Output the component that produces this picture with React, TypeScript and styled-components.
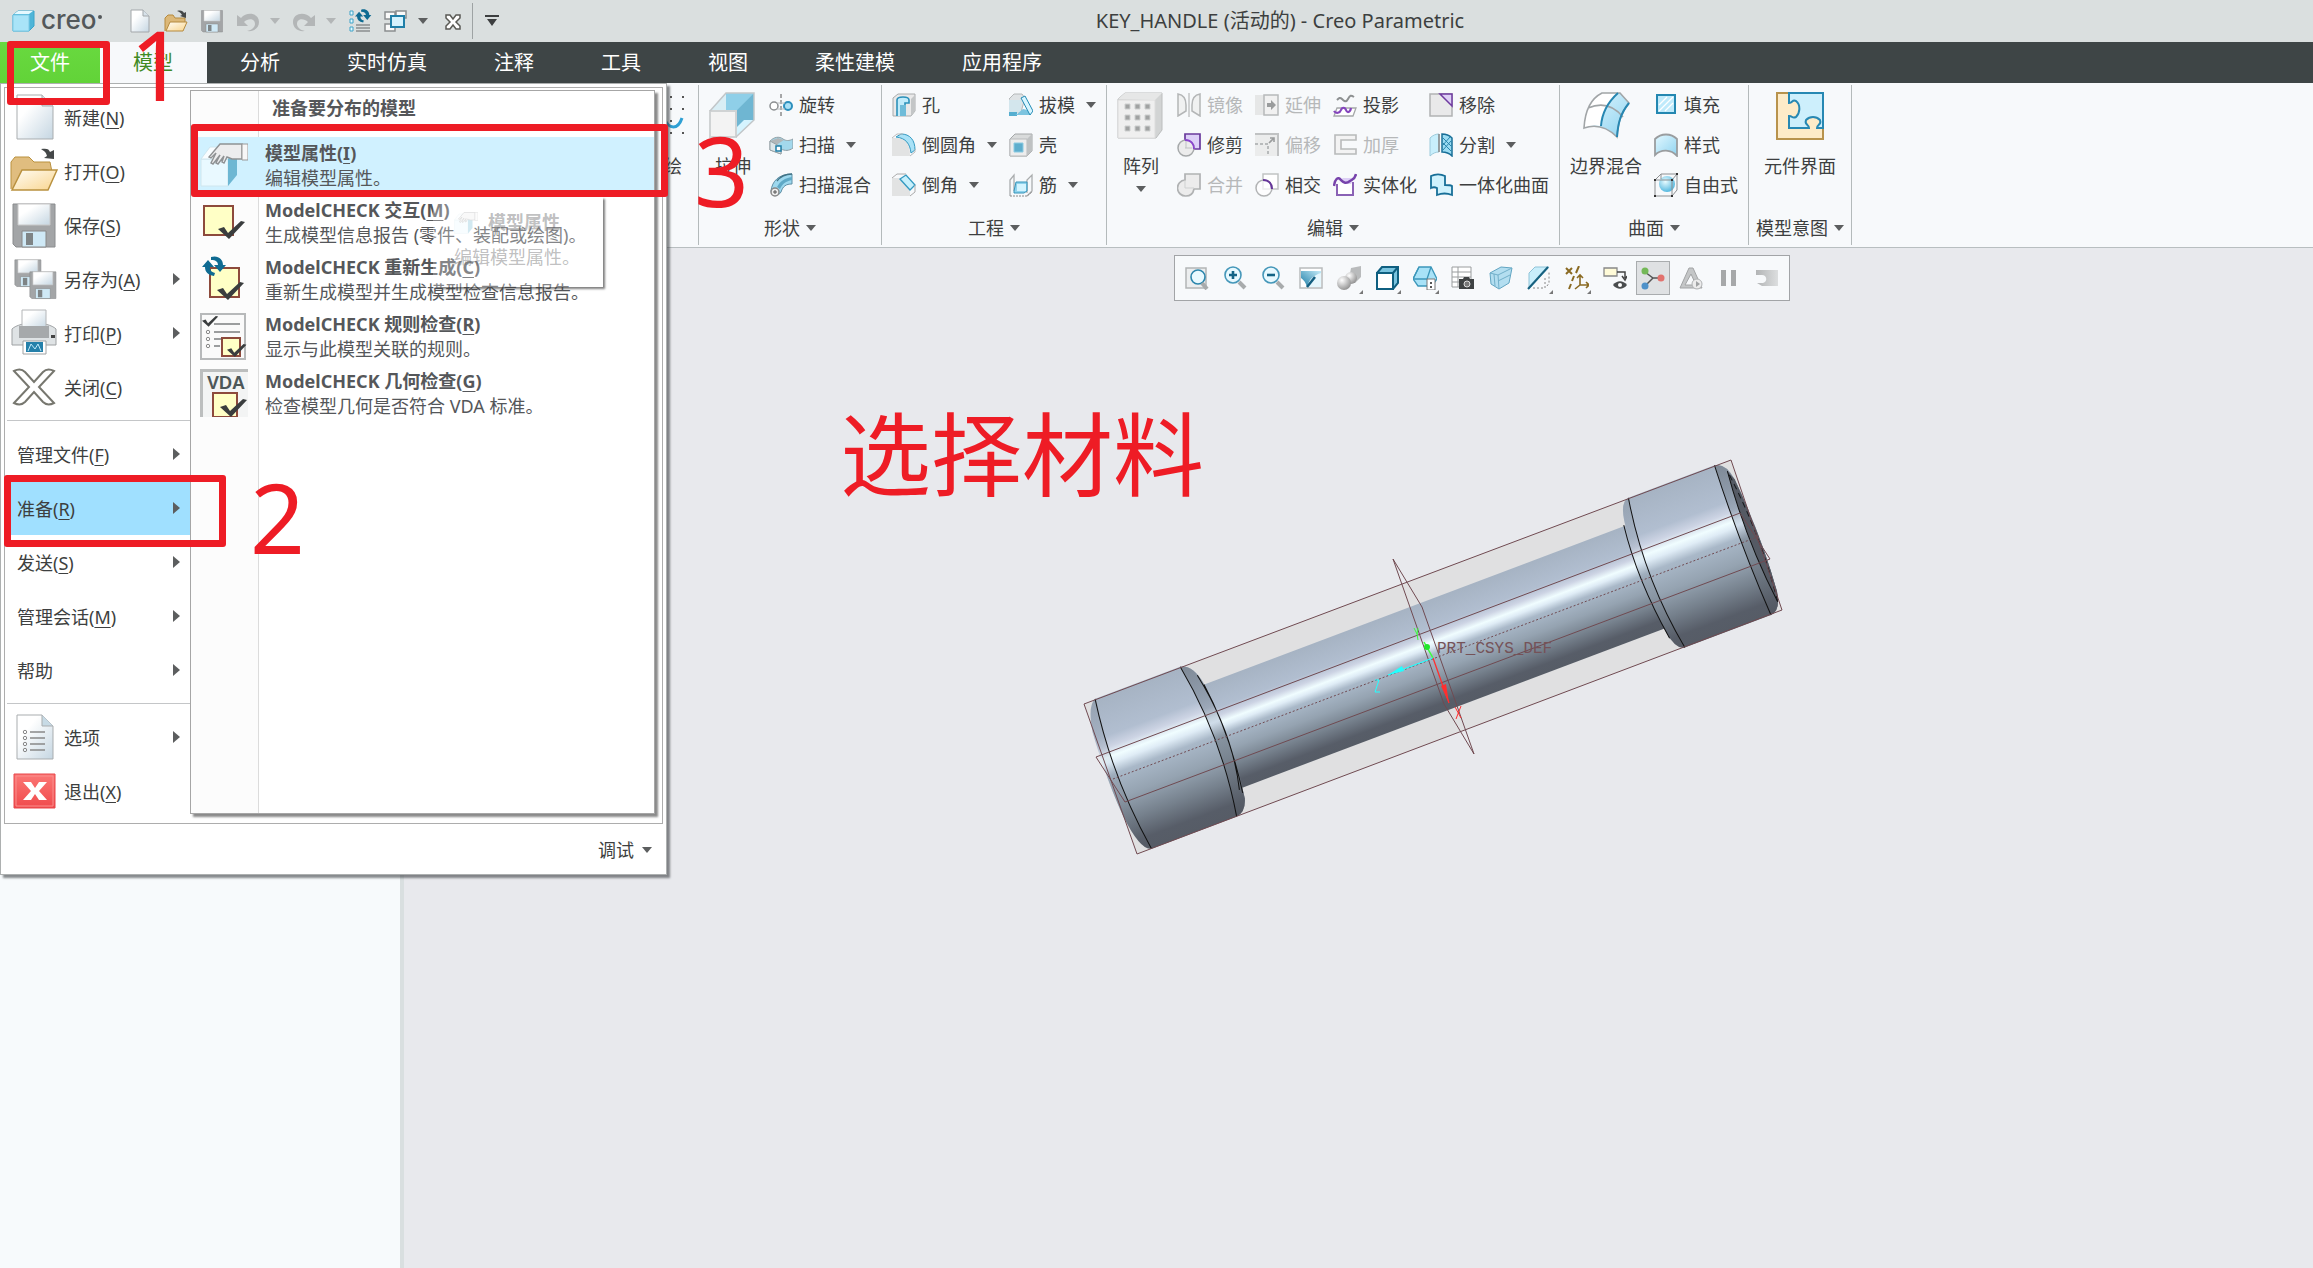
import React from "react";
import styled, { createGlobalStyle } from "styled-components";

const RED = "#ee1c25";
const INK = "#3d3f40";
const BLUE = "#1f7fa8";

const GlobalStyle = createGlobalStyle`
  * { box-sizing: border-box; }
  body {
    margin: 0;
    font-family: "Noto Sans", "Noto Sans CJK SC", sans-serif;
    font-size: 18px;
    color: ${INK};
  }
  button { font: inherit; color: inherit; border: 0; margin: 0; padding: 0; background: none; cursor: pointer; }
  svg { display: block; flex: none; }
`;

/* ---------- page frame ---------- */

const Page = styled.div`
  position: relative;
  display: flex;
  flex-direction: column;
  min-height: 100vh;
  overflow: hidden;
  background: #e8e9ed;
`;

const TitleBar = styled.header`
  display: flex;
  align-items: center;
  gap: 12px;
  height: 42px;
  padding: 0 264px 0 12px;
  background: #dadfdf;
`;

const Brand = styled.div`
  display: flex;
  align-items: center;
  gap: 5px;
  width: 104px;
  color: #53585a;
  font-family: Inter, sans-serif;
  font-size: 26px;
  font-weight: 500;
  line-height: 34px;
`;

const BrandName = styled.span`
  display: flex;
  margin-top: -2px;
  &::after {
    content: "";
    width: 4px;
    height: 4px;
    margin: 12px 0 0 1px;
    border-radius: 50%;
    background: #53585a;
  }
`;

const QuickButton = styled.button`
  display: grid;
  place-items: center;
  width: 24px;
  height: 28px;
`;

const QuickArrow = styled.button`
  display: grid;
  place-items: center;
  width: 10px;
  height: 28px;
  margin-left: -2px;
`;

const CustomizeButton = styled.button`
  display: grid;
  place-items: center;
  width: 14px;
  height: 28px;
`;

const QuickDivider = styled.span`
  width: 1px;
  height: 36px;
  margin-left: -4px;
  background: #9ea3a4;
`;

const WindowTitle = styled.h1`
  flex: 1;
  margin: 0;
  text-align: center;
  font-size: 20px;
  font-weight: 400;
  line-height: 40px;
`;

const TabBar = styled.nav`
  display: flex;
  height: 41px;
  background: #3e4546;
`;

const Tab = styled.button<{ $kind?: "file" | "active" }>`
  padding: 0 ${(p) => (p.$kind === "file" ? 30 : 34)}px 0 ${(p) => (p.$kind === "file" ? 30 : 33)}px;
  font-size: 20px;
  line-height: 42px;
  color: ${(p) => (p.$kind === "active" ? "#3f8a24" : "#fff")};
  background: ${(p) =>
    p.$kind === "file" ? "linear-gradient(#69d940, #62d338)" : p.$kind === "active" ? "#f7f9fb" : "none"};
`;

/* ---------- ribbon ---------- */

const Ribbon = styled.section`
  display: flex;
  height: 165px;
  padding: 2px 0;
  border-bottom: 1px solid #b8bec0;
  background: #f7f9fb;
`;

const Group = styled.div<{ $lead?: boolean }>`
  display: flex;
  flex-direction: column;
  align-items: ${(p) => (p.$lead ? "flex-end" : "stretch")};
  ${(p) => p.$lead && "width: 699px;"}
  border-right: 1px solid #b4babb;
`;

const GroupBody = styled.div`
  display: flex;
  justify-content: center;
  gap: 12px;
  height: 126px;
  padding: 0 10px;
`;

const Column = styled.div`
  display: grid;
  grid-template-rows: repeat(3, 40px);
  justify-items: start;
`;

const ToolButton = styled.button`
  display: flex;
  align-items: center;
  gap: 6px;
  line-height: 26px;
  white-space: nowrap;
  &:disabled { color: #b6b8b9; }
`;

const BigButton = styled.button`
  display: flex;
  flex-direction: column;
  align-items: center;
  gap: 6px;
  min-width: 48px;
  padding-top: 7px;
  line-height: 28px;
  white-space: nowrap;
  svg:first-child { margin-bottom: 6px; }
`;

const GroupLabel = styled.button`
  display: flex;
  align-items: center;
  justify-content: center;
  gap: 6px;
  height: 34px;
  padding: 0 7px;
  line-height: 34px;
`;

const ArrowGap = styled.span`
  display: flex;
  margin-left: 5px;
`;

/* ---------- workspace ---------- */

const Workspace = styled.main`
  display: flex;
  flex: 1;
`;

const TreePanel = styled.aside`
  width: 404px;
  border-right: 4px solid #d9dfe0;
  background: #f7fafc;
`;

const Canvas = styled.section`
  position: relative;
  flex: 1;
`;

const ViewBar = styled.div`
  position: absolute;
  top: 7px;
  left: 770px;
  display: flex;
  gap: 4px;
  padding: 5px;
  border: 1px solid #a2a4a7;
  background: #f7f9fb;
`;

const ViewButton = styled.button<{ $on?: boolean }>`
  position: relative;
  display: grid;
  place-items: center;
  width: 34px;
  height: 34px;
  ${(p) => p.$on && "background: #dfe1e3; border: 1px solid #a9acae;"}
`;

const Corner = styled.i`
  position: absolute;
  right: 3px;
  bottom: 1px;
  border: 2px solid #777;
  border-top-color: transparent;
  border-left-color: transparent;
`;

const Model = styled.svg`
  position: absolute;
  top: 193px;
  left: 666px;
`;

/* ---------- file menu ---------- */

const FileMenu = styled.div`
  position: absolute;
  top: 83px;
  left: 0;
  width: 667px;
  padding: 3px 3px 0 3px;
  border: 1px solid #adb0b0;
  background: #fff;
  box-shadow: 3px 3px 2px rgba(60, 64, 66, 0.6);
`;

const MenuFrame = styled.div`
  display: flex;
  align-items: flex-start;
  padding: 2px 7px 5px 2px;
  border: 1px solid #adadad;
`;

const MenuList = styled.div`
  display: flex;
  flex-direction: column;
  width: 183px;
`;

const MenuItem = styled.button<{ $on?: boolean }>`
  display: flex;
  align-items: center;
  height: 54px;
  padding: 0 10px;
  gap: 10px;
  text-align: left;
  background: ${(p) => (p.$on ? "#a0e0ff" : "none")};
`;

const MenuIcon = styled.span`
  display: grid;
  place-items: center;
  width: 48px;
  margin-left: -7px;
  margin-right: -4px;
`;

const MenuText = styled.span`
  flex: 1;
  white-space: nowrap;
  u { text-underline-offset: 3px; text-decoration-thickness: 1px; }
`;

const MenuRule = styled.hr`
  width: 100%;
  height: 1px;
  margin: 6px 0;
  border: 0;
  background: #c4c6c8;
`;

const SubMenu = styled.div`
  flex: 1;
  min-height: 724px;
  border: 1px solid #a6a6a6;
  background: linear-gradient(to right, #fcfcfc 67px, #dcdcdc 67px 68px, #fff 68px);
  box-shadow: 3px 3px 2px rgba(60, 60, 60, 0.6);
  color: #55575a;
`;

const SubTitle = styled.h2`
  margin: 0;
  padding: 0 0 12px 81px;
  font-size: 18px;
  line-height: 34px;
`;

const SubItem = styled.button<{ $on?: boolean }>`
  display: grid;
  grid-template-columns: 48px 1fr;
  column-gap: 17px;
  align-content: start;
  width: 100%;
  height: 57px;
  padding: 4px 0 0 9px;
  text-align: left;
  line-height: 25px;
  background: ${(p) => (p.$on ? "#d0f1ff" : "none")};
  svg { grid-row: span 2; }
  u { text-underline-offset: 3px; text-decoration-thickness: 1px; }
`;

const MenuFooter = styled.div`
  display: flex;
  justify-content: flex-end;
  padding: 2px 11px 0 0;
`;

const FooterButton = styled.button`
  display: flex;
  align-items: center;
  gap: 8px;
  line-height: 48px;
`;

const Tooltip = styled.div`
  position: absolute;
  top: 197px;
  left: 433px;
  width: 170px;
  height: 90px;
  padding: 8px 0 0 21px;
  background: rgba(255, 255, 255, 0.28);
  box-shadow: 2px 2px 2px rgba(60, 60, 60, 0.65);
  clip-path: inset(0 -6px -6px 0);
  line-height: 35px;
  color: rgba(90, 92, 94, 0.4);
  p { margin: 0; }
`;

const TipHead = styled.strong`
  display: flex;
  align-items: center;
  gap: 10px;
  svg { opacity: 0.3; }
`;

/* ---------- tutorial marks ---------- */

const Box = styled.div<{ $x: number; $y: number; $w: number; $h: number }>`
  position: absolute;
  left: ${(p) => p.$x}px;
  top: ${(p) => p.$y}px;
  width: ${(p) => p.$w}px;
  height: ${(p) => p.$h}px;
  border: 7px solid ${RED};
  border-radius: 3px;
  pointer-events: none;
`;

const Mark = styled.span<{ $x: number; $y: number; $size?: number }>`
  position: absolute;
  left: ${(p) => p.$x}px;
  top: ${(p) => p.$y}px;
  font-size: ${(p) => p.$size ?? 96}px;
  line-height: 100px;
  white-space: nowrap;
  color: ${RED};
  pointer-events: none;
`;

/* ---------- icons ---------- */

const HiddenDefs = styled.svg`
  position: absolute;
`;

const Defs = () => (
  <HiddenDefs width="0" height="0" aria-hidden="true">
    <defs>
      <linearGradient id="sheet" x1="0" y1="0" x2="1" y2="1">
        <stop offset=".3" stopColor="#fff" />
        <stop offset="1" stopColor="#c5d6e2" />
      </linearGradient>
      <linearGradient id="aqua" x1="0" y1="0" x2="1" y2="1">
        <stop offset="0" stopColor="#e3f8ff" />
        <stop offset="1" stopColor="#8fd3f0" />
      </linearGradient>
      <linearGradient id="sea" x1="0" y1="1" x2="1" y2="0">
        <stop offset="0" stopColor="#1d7da6" />
        <stop offset="1" stopColor="#c4ebf8" />
      </linearGradient>
      <linearGradient id="folder" x1="0" y1="0" x2="1" y2="1">
        <stop offset="0" stopColor="#fffdf6" />
        <stop offset="1" stopColor="#f9d58e" />
      </linearGradient>
      <linearGradient id="redkey" x1="0" y1="0" x2="0" y2="1">
        <stop offset="0" stopColor="#fb7775" />
        <stop offset="1" stopColor="#f04a4c" />
      </linearGradient>
      <linearGradient id="fade" x1="0" y1="0" x2="1" y2="0">
        <stop offset="0" stopColor="#b2b4b5" />
        <stop offset="1" stopColor="#dcdedf" />
      </linearGradient>
      <radialGradient id="ball" cx=".35" cy=".3" r=".8">
        <stop offset="0" stopColor="#fff" />
        <stop offset="1" stopColor="#888" />
      </radialGradient>
      <radialGradient id="blueball" cx=".4" cy=".35" r=".7">
        <stop offset="0" stopColor="#e8fbff" />
        <stop offset="1" stopColor="#4bb4dd" />
      </radialGradient>
    </defs>
  </HiddenDefs>
);

type DrawProps = { size?: number; box?: number; children?: React.ReactNode };
const Draw = ({ size = 24, box = 24, children }: DrawProps) => (
  <svg width={size} height={size} viewBox={`0 0 ${box} ${box}`} fill="none" aria-hidden="true">
    {children}
  </svg>
);

const Caret = ({ color = "#5c5e5f" }: { color?: string }) => (
  <svg width="10" height="6" viewBox="0 0 10 6" aria-hidden="true">
    <path d="M0 0h10L5 6z" fill={color} />
  </svg>
);

const CaretRight = () => (
  <svg width="7" height="12" viewBox="0 0 7 12" aria-hidden="true">
    <path d="M0 0v12L7 6z" fill="#5c5e5f" />
  </svg>
);

const floppy = (
  <>
    <path d="M3 3h42v43H6l-3-3z" fill="#a3a5a7" stroke="#8a8c8e" />
    <path d="M8 3h32v21H8z" fill="url(#sheet)" stroke="#c9c9c9" />
    <path d="M12 30h24v16H12z" fill="#cfe9f6" stroke="#888" />
    <path d="M16 32h7v12h-7z" fill="#7e8486" />
  </>
);

const check = <path d="m0 8 6-2 4 6L23 0l4 1-16 17z" fill="#3a3d3e" />;
const note = (x: number, y: number, s: number) => (
  <path d={`M${x} ${y}h${s}v${s}h-${s}z`} fill="#ffffc6" stroke="#8d4a3c" strokeWidth="2" />
);
const cycle = (
  <g fill="#0f6b92">
    <path d="M12 20C6 19 3 16 3 11H0l6-7 6 7H8c0 3 1 5 5 6z" />
    <path d="M9 1c7-2 12 2 12 8h3l-6 7-6-7h4c0-3-2-5-7-5z" />
  </g>
);

const icons: Record<string, React.ReactNode> = {
  cube: <><path d="M1 6 6 2h16v15l-5 5H1z" fill="#4eb5d8" stroke="#3ba4c9" /><path d="M1 6h16v16H1z" fill="#a9e4f8" stroke="#7dcbe6" /><path d="m2 5 4-3h15l-4 3z" fill="#e5f9ff" /></>,
  page: <><path d="M3 1h12l6 6v16H3z" fill="url(#sheet)" stroke="#a3a7aa" /><path d="M15 1v6h6" fill="#d7e2ea" stroke="#a3a7aa" /></>,
  open: <><path d="M1 22V9l3-3h5l2 3h10v4" fill="#dcb878" stroke="#b58a3e" /><path d="m2 22 4-9h17l-4 9z" fill="url(#folder)" stroke="#b58a3e" /><path d="M13 2c4-1 6 0 7 2l2-1v6l-6-2 2-1c-1-2-2-3-5-4z" fill="#454849" /></>,
  save: <g transform="scale(.5)">{floppy}</g>,
  undo: <path d="M1 6v11h11l-4-4c4-4 11-4 11 2 0 3-3 6-8 7 8 1 12-4 12-9 0-9-12-11-18-4z" fill="#b3b6b7" />,
  redo: <path d="M23 6v11H12l4-4C12 9 5 9 5 15c0 3 3 6 8 7-8 1-12-4-12-9C1 4 13 2 19 9z" fill="#b3b6b7" />,
  regen: <><path d="M2 2h3v4H2zM2 10h3v4H2zM2 18h3v4H2z" fill="#e3f8ff" stroke="#3fa3c8" /><g transform="translate(7 0) scale(.68)">{cycle}</g><path d="M8 16h14M8 19h14M8 22h14" stroke="#8b8e90" strokeWidth="1.5" /></>,
  windows: <><path d="M1 3h10v7H1zM12 2h10v7H12zM1 15h10v7H1z" fill="#fafafa" stroke="#8b8e90" strokeWidth="1.5" /><path d="M7 7h13v11H7z" fill="#d5f2fd" stroke={BLUE} strokeWidth="2" /></>,
  close: <path d="M6 6h4l3 4 3-4h4v3l-4 4 4 4v3h-4l-3-4-3 4H6v-3l4-4-4-4z" fill="#fff" stroke="#5a5a55" strokeWidth="1.5" />,
  extrude: <><path d="M17 1h28v27L27 45V19H1z" fill="#a7dcf0" /><path d="M17 1h28L27 19H1z" fill="#8fcfe8" /><path d="M17 1v18H1z" fill="#d9eef5" /><path d="M45 1v27L27 45V19z" fill="#6fb6d2" /><path d="m27 45 18-17H35l-8 8z" fill="#d5f4ff" /><path d="M1 19h26v26H1z" fill="#f3f3f3" stroke="#d0d3d4" strokeWidth="2" /><path d="M1 19 17 1h28v27L27 45" stroke="#c3c7c9" strokeWidth="1.5" /></>,
  sketch: <><path d="M6 4h2v2H6zM18 4h2v2h-2zM30 4h2v2h-2zM42 4h2v2h-2zM18 16h2v2h-2zM30 16h2v2h-2zM42 16h2v2h-2zM30 28h2v2h-2zM30 40h2v2h-2zM42 40h2v2h-2z" fill="#555" /><path d="M6 30c4-18 12-18 18-4 5 12 14 12 18 0" stroke="#2fa0d4" strokeWidth="3" /></>,
  revolve: <><path d="M12 1v22" stroke="#555" strokeDasharray="4 2" /><circle cx="5" cy="13" r="4" fill="#fff" stroke="#8b8e90" strokeWidth="1.5" /><circle cx="19" cy="13" r="4" fill="#a9e0f6" stroke="#2c8fbd" strokeWidth="2" /><path d="M8 10h8M8 16h8" stroke="#b8bbbc" /></>,
  sweep: <><path d="M1 8c4-4 9-5 13-2 3 2 6 2 10 0v9c-4 3-8 3-12 1v5l-11-4z" fill="#a3d8ec" stroke="#8f9ea4" /><path d="m1 8 8-3 6 2-8 5z" fill="#b2b7b9" /><path d="M1 8v9l11 4v-7z" fill="#dde7ea" stroke="#98a3a7" /><path d="M7 13h5v5H7z" fill="#fff" stroke={BLUE} strokeWidth="1.5" /></>,
  sweepBlend: <><path d="M2 18C3 8 10 1 23 1v10c-6 0-9 2-11 8-3 5-9 4-10-1z" fill="#9dd8ee" stroke="#5f8fa5" /><path d="M8 14c3-6 8-9 15-10v3c-6 1-10 4-12 9z" fill="#5fa9c6" /><path d="M8 8c3-4 8-7 15-7" stroke="#417386" strokeWidth="1.3" /><circle cx="6" cy="19" r="4" fill="#eee" stroke="#888" strokeWidth="1.5" /><path d="M6 17v4M4 19h4" stroke="#555" /></>,
  hole: <><path d="m1 5 5-4h17v17l-4 5H1z" fill="#e9e9e9" stroke="#a9acad" /><path d="M5 23V7c0-4 12-4 12 0v3h-4v13" fill="#c1ecfb" stroke="#2b91ba" strokeWidth="1.6" /><path d="M8 12h6v11H8z" fill="#6fbcd9" /><path d="M23 2v16l-4 5V6z" fill="#c3c6c7" /></>,
  round: <><path d="M0 5h5c9 0 13 5 13 18H0z" fill="#e2e3e3" /><path d="m4 4 5-3c9 0 14 6 14 16l-4 3C18 11 14 5 4 4z" fill="#a9e2f7" stroke="#3399c1" /><path d="m0 5 5-4h6" stroke="#bbb" /><path d="m18 23 5-4v-3" stroke="#bbb" /></>,
  chamfer: <><path d="M0 5h8l10 10v8H0z" fill="#e2e3e3" /><path d="m8 6 6-4 9 10-5 5z" fill="#c7f0fc" stroke="#3399c1" strokeWidth="1.3" /><path d="m0 5 5-4h9M18 23l5-4v-7" stroke="#aaa" /></>,
  draft: <><path d="m0 6 5-5h8l3 4-4 14H0z" fill="#dfe3e5" stroke="#b5b8b9" /><path d="M0 19h8v4H0z" fill="#55aed0" /><path d="M0 7h12v12H0z" fill="#d3e6ed" /><path d="m8 21 6-5 9 2-2 4H6z" fill="#7cc4df" /><path d="m12 5 9 17 3-4-8-15z" fill="#d8f5ff" stroke="#238bb5" /></>,
  shell: <><path d="m1 6 5-5h17v17l-5 5H1z" fill="#d9dbdb" stroke="#a4a7a8" /><path d="M1 6h17v17H1z" fill="#ededed" stroke="#b9bbbc" /><path d="M5 10h9v9H5z" fill="#5faecd" stroke="#8ccbe2" /><path d="M18 6 23 1v17l-5 5z" fill="#bfc2c3" /></>,
  rib: <><path d="M1 23V7l4-5v16M18 20V7l5-5v16l-5 5" stroke="#aaadae" strokeWidth="1.3" /><path d="M1 23h17l5-4" stroke="#888" strokeDasharray="2 1" /><path d="m5 18 2-9h11v9l-3 2H5z" fill="#8ed2ec" stroke="#3594ba" /><path d="M8 11h9v7H8z" fill="#d3f4ff" /></>,
  pattern: <><path d="m1 7 7-6h37v37l-6 8H1z" fill="#d2d4d4" stroke="#bcbebe" /><path d="M1 8h37v38H1z" fill="#efefef" stroke="#dcdcdc" /><path d="m1 7 7-6h37l-7 7z" fill="#e6e7e7" />{[9, 20, 31].map((y) => [8, 18, 28].map((x) => <path key={`${x}-${y}`} d={`M${x} ${y + 3}h5v5h-5z`} fill="#a0a2a2" stroke="#cdcfcf" />))}</>,
  mirror: <><path d="M1 1c6 1 8 5 8 11v6l-8 5zM23 1c-6 1-8 5-8 11v6l8 5z" fill="#f0f1f1" stroke="#b4b6b7" strokeWidth="1.5" /><path d="M12 0v24" stroke="#c3c5c6" strokeWidth="1.5" /></>,
  extend: <><path d="M0 2h9v20H0z" fill="#e6e7e7" /><path d="M9 2h14v20H9z" fill="#f1f1f1" stroke="#b7b9ba" strokeWidth="1.5" /><path d="M12 10h4V7l5 5-5 5v-3h-4z" fill="#9a9c9d" /></>,
  project: <><path d="M4 7c2-2 3-3 5-1s4 4 6 0 3-4 6-2" stroke="#8d9091" strokeWidth="2" /><path d="m1 23 3-8h19l-3 8z" fill="#fff" stroke="#a5a8a9" strokeWidth="1.3" /><path d="M1 18c2 3 6 2 7-1s4-3 5 0 4 3 5-2" stroke="#8445bd" strokeWidth="2.2" /></>,
  remove: <><path d="M1 1h22v22H1z" fill="#e9e9ea" stroke="#b1b3b4" strokeWidth="1.5" /><path d="M11 1h12v12z" fill="#ded0f6" stroke="#6f3aa0" strokeWidth="1.5" /></>,
  trim: <><path d="M8 1h15v15H8z" fill="#ddd0f8" stroke="#693a9c" strokeWidth="1.7" /><circle cx="9" cy="15" r="8" fill="#ececec" stroke="#a6a9aa" strokeWidth="1.5" /><path d="M8 7c6 0 9 4 9 9" stroke="#8a42cf" strokeWidth="2" /><path d="M8 15h7M9 8v7" stroke="#c0c2c3" /></>,
  offset: <><path d="M0 1h23v22H0z" fill="#ebecec" /><path d="M0 1h23v22" stroke="#c0c2c3" strokeWidth="2" /><path d="M0 11h13v12" stroke="#a7a9aa" strokeWidth="1.5" strokeDasharray="3 2" /><path d="m14 10 5-5m-4 0h4v4" stroke="#9a9c9d" strokeWidth="1.6" /></>,
  thicken: <path d="M2 2h21v5H8v9h15v5H2z" fill="#f3f3f3" stroke="#b8babb" strokeWidth="1.6" />,
  split: <><path d="M1 5c3-3 6-4 9-4v18c-3 0-6 1-9 4z" fill="#c8effc" stroke="#9ccadb" /><path d="M13 1c4 0 7 1 10 4v18c-3-3-6-4-10-4z" fill="#9bdcf3" stroke="#186f98" strokeWidth="1.5" /><path d="m14 5 8 8m-8-3 8 8m-8-1 8-9m-8 4 7-8" stroke="#2a86ae" /><path d="M10 1v18" stroke="#888" strokeWidth="1.5" /></>,
  merge: <><path d="M8 1h15v15h-6c-1 5-4 7-8 7a8 8 0 1 1-1-16z" fill="#ececec" stroke="#b0b2b3" strokeWidth="1.7" /><path d="M8 7v8h9" stroke="#cfd1d1" /></>,
  intersect: <><path d="M8 1h15v15H8z" fill="#fff" stroke="#c1c3c4" strokeWidth="1.5" /><circle cx="9" cy="15" r="8" fill="#fff" fillOpacity=".7" stroke="#b1b3b4" strokeWidth="1.5" /><path d="M8 7c6 0 9 4 9 9" stroke="#66369a" strokeWidth="2.2" /></>,
  solidify: <><path d="M4 11v11h16V9" fill="#fff" stroke="#8a62b5" strokeWidth="2" /><path d="M9 5h12l-3 6h-5z" fill="#ddd0f6" /><path d="M1 13c1-7 4-10 7-6 3 3 5 4 9 1 3-2 5-2 6-7" stroke="#7743ab" strokeWidth="2.5" /></>,
  quilt: <path d="M2 3c4-2 10-2 14 0v9c4 0 6 0 7 1v9c-5-2-10-2-15 0v-7c-2-1-4-1-6 0z" fill="#cff2fd" stroke="#176f98" strokeWidth="1.8" />,
  boundary: <><path d="M2 36C3 18 10 6 20 1h18l9 10C38 22 36 32 35 45 25 35 14 32 2 36z" fill="url(#aqua)" /><path d="M2 36C3 18 10 6 20 1h16C26 10 20 20 19 34 14 33 8 33 2 36z" fill="#fff" /><path d="M2 36C3 18 10 6 20 1h18l9 10C38 22 36 32 35 45 25 35 14 32 2 36zM6 16c14-6 26-2 35 9" stroke="#a1a5a7" strokeWidth="1.6" /><path d="M36 1C26 10 20 20 19 34M47 11C38 22 36 32 35 45" stroke="#2787b2" strokeWidth="2" /></>,
  fill: <><path d="M3 2h18v18H3z" fill="#bfeafb" stroke="#2387b1" strokeWidth="2" /><path d="m5 12 8-8M5 18 19 4m-8 14 8-8" stroke="#fff" strokeWidth="1.3" /></>,
  style: <path d="M1 6c6-6 16-6 22 0v17c-6-7-16-7-22-1z" fill="url(#aqua)" stroke="#9a9d9f" strokeWidth="1.8" />,
  freestyle: <><circle cx="13" cy="11" r="8" fill="url(#blueball)" /><path d="M1 7h17v16H1zM1 7l6-6h16v16l-5 6M18 7l5-6M7 1v5" stroke="#8c8f91" /><path d="M0 6h2v2H0zM17 6h2v2h-2zM0 22h2v2H0zM17 22h2v2h-2zM22 0h2v2h-2z" fill="#333" /></>,
  puzzle: <><path d="M1 1h46v46H1z" fill="#fdebc8" stroke="#b8934d" strokeWidth="2" /><path d="M13 1h34v35h-6c0-4 5-3 3-8-4-4-10-4-14 0-2 5 3 4 3 8H13V24c4 0 3 3 7 1 4-4 5-12 0-16-4-2-3 2-7 2z" fill="#cdeffc" stroke="#2788b3" strokeWidth="2" /></>,
  zoomFit: <><path d="M1 2h20v20H1z" fill="#eceeef" stroke="#b3b5b6" strokeWidth="1.5" /><circle cx="13" cy="11" r="7" fill="#e8f9ff" stroke="#2b86ad" strokeWidth="1.6" /><path d="m17 17 5 6" stroke="#a8abac" strokeWidth="4" /></>,
  zoomIn: <><circle cx="10" cy="9" r="8" fill="#e8f9ff" stroke="#4597b9" strokeWidth="1.6" /><path d="m16 16 6 6" stroke="#a8abac" strokeWidth="4" /><path d="M10 5v8M6 9h8" stroke="#136486" strokeWidth="2.6" /></>,
  zoomOut: <><circle cx="10" cy="9" r="8" fill="#e8f9ff" stroke="#4597b9" strokeWidth="1.6" /><path d="m16 16 6 6" stroke="#a8abac" strokeWidth="4" /><path d="M6 9h8" stroke="#136486" strokeWidth="2.6" /></>,
  repaint: <><path d="M1 2h22v20H1z" fill="#fff" stroke="#b9bcbd" strokeWidth="1.5" /><path d="M2 5h20v3c-6 1-10 5-13 13H2z" fill="url(#sea)" /><path d="M22 7v14H8c2-8 7-12 14-14z" fill="#e6f7fd" /><path d="M2 12c3 2 5 5 6 9H2z" fill="#fff" /><path d="m8 21 8-10" stroke="#145f80" strokeWidth="2.5" /></>,
  shading: <><path d="m14 2 10-2v11l-6 6-6-4z" fill="#b9bbbc" /><circle cx="14" cy="12" r="6" fill="url(#ball)" /><circle cx="7" cy="17" r="7" fill="url(#ball)" /></>,
  box: <><path d="m2 7 5-6h16v16l-5 6H2z" fill="#7ac4df" stroke="#0f5f80" strokeWidth="2" /><path d="M2 7h16v16H2z" fill="#fff" stroke="#0f5f80" strokeWidth="2" /><path d="m18 7 5-6" stroke="#0f5f80" strokeWidth="2" /></>,
  views: <><path d="M6 1h12l6 12-5 7H5L0 13z" fill="#a8e2f7" stroke="#3c97ba" strokeWidth="1.3" /><path d="M6 1 0 13h14l4-12M14 13l5 7" stroke="#3c97ba" strokeWidth="1.3" /><path d="M14 13h8v11h-8z" fill="#fff" stroke="#777" /><path d="M17 16h2v2h-2zM17 20h2v2h-2z" fill="#555" /></>,
  camera: <><path d="M1 1h19v20H1zM1 6h19M1 11h19M1 16h19M7 1v20" fill="#fff" stroke="#9a9d9e" /><path d="M8 13h4l1-2h5l1 2h4v10H8z" fill="#3f4243" /><circle cx="16" cy="18" r="3" fill="#777" stroke="#ddd" /></>,
  section: <><path d="m1 7 11-6 11 1-3 15-10 6-8-5z" fill="#b3def0" stroke="#62a5c2" /><path d="m1 7 8 2 14-7M9 9l1 14M5 8l1 12M9 15l12-6" stroke="#72b0ca" /></>,
  datum: <><path d="m2 7 6-6h14L2 23z" fill="#c9eefb" stroke="#8fc3d8" /><path d="M6 22h12V10M20 20l2-3V6" stroke="#888" strokeDasharray="2 2" /><path d="M1 23 21 1" stroke="#17617f" strokeWidth="2" /></>,
  axes: <><path d="m1 2 6 6m0-6L1 8M14 0l-3 7M9 10l-2 5M6 18l-2 5" stroke="#8a6a22" strokeWidth="2" /><path d="M15 10v9h8M15 19l-5 4m2-11 3-3 3 3m3 4 3 3-3 3" stroke="#8a6a22" strokeWidth="1.6" /></>,
  annotate: <><path d="M1 2h13v8H1z" fill="#fffbd8" stroke="#888" strokeWidth="1.3" /><path d="M14 6h8v6m-3-2 3 4 2-4" stroke="#444" strokeWidth="1.5" /><path d="M10 19c4-5 10-5 14 0-4 5-10 5-14 0z" fill="#4a4d4e" /><circle cx="17" cy="19" r="2" fill="#fff" /></>,
  spin: <><path d="m4 6 8 6 8 0M12 12l-8 8" stroke="#555" strokeWidth="1.5" /><circle cx="4" cy="5" r="3.5" fill="#74b857" /><circle cx="20" cy="12" r="3.5" fill="#e2726e" /><circle cx="4" cy="20" r="3.5" fill="#4f92c9" /></>,
  simulate: <><path d="m10 2 4 0 9 20H1zM12 8 6 19h11z" fill="#c4c6c7" fillRule="evenodd" stroke="#a2a4a5" /><circle cx="18" cy="18" r="5" fill="#ececec" stroke="#b0b2b3" /><path d="m17 15 4 3-4 3z" fill="#a0a2a3" /></>,
  pause: <path d="M4 4h5v16H4zM14 4h5v16h-5z" fill="#a6a8a9" />,
  stop: <path d="M1 4h22v16H7l-5-3h6c5-1 4-8-1-8H1z" fill="url(#fade)" />,
};

const bigIcons: Record<string, React.ReactNode> = {
  page: <><path d="M7 2h25l11 11v33H7z" fill="url(#sheet)" stroke="#a9adaf" /><path d="M32 2v11h11" fill="#d5e0e8" stroke="#a9adaf" /></>,
  open: <><path d="M1 42V15l4-5h14l5 5h16l2 10" fill="#e0bd7f" stroke="#b9913f" /><path d="m2 43 10-20h35L38 43z" fill="url(#folder)" stroke="#b9913f" strokeWidth="1.5" /><path d="M31 2c6-1 8 0 9 3l4-2v9l-10-1 3-2c-1-4-3-5-6-7z" fill="#454849" /></>,
  save: floppy,
  saveAs: <><g transform="translate(3 3) scale(.62)">{floppy}</g><g transform="translate(18 15) scale(.62)">{floppy}</g></>,
  print: <><path d="M2 20c8-8 36-8 44 0v16H2z" fill="#dfe3e5" stroke="#9ea1a3" /><path d="M12 1h24v19H12z" fill="url(#sheet)" stroke="#b4b6b8" /><path d="M9 17h30v12H9z" fill="#a6a9ab" /><path d="M41 26h4v3h-4z" fill="#444" /><path d="M13 32h23v13H13z" fill="#fff" stroke="#9ea1a3" /><path d="M16 33h17v10H16z" fill="#2580aa" /><path d="m18 42 3-7 4 5 3-5 3 7" stroke="#bfe9fa" /></>,
  close: <path d="M4 8c4-2 8-2 11 1l9 10 9-10c3-3 7-3 11-1L29 24l15 16c-4 2-8 2-11-1l-9-10-9 10c-3 3-7 3-11 1l15-16z" fill="#fff" stroke="#77776f" strokeWidth="2" />,
  options: <><path d="M7 2h25l11 11v33H7z" fill="url(#sheet)" stroke="#a9adaf" /><path d="M32 2v11h11" fill="#c7dae5" stroke="#a9adaf" />{[19, 25, 31, 37].map((y) => <g key={y}><circle cx="15" cy={y} r="1.7" stroke="#888" /><path d={`M20 ${y}h15`} stroke="#888" strokeWidth="1.5" /></g>)}</>,
  exit: <><path d="M4 7h41v34H4z" fill="url(#redkey)" stroke="#e8464a" /><path d="M6 9h37v30H6z" stroke="#fa8f8d" /><path d="M13 15h8l4 6 4-6h8l-8 9 8 9h-8l-4-6-4 6h-8l8-9z" fill="#fff" /></>,
  props: <><path d="M1 18h27v27H1z" fill="#e9f9ff" stroke="#cfe6ee" /><path d="m1 18 9-12h28L28 18z" fill="#f9fdff" stroke="#cfe6ee" /><path d="m28 18 9-9v25l-9 11z" fill="#6db7d3" /><path d="M20 3h22v15H32l-5-2-3 6-2-1 2-6-6 8-2-1 4-8-7 9-2-1 5-10-5 5-2-1z" fill="#ededee" stroke="#8f9294" strokeWidth="1.4" /><path d="M42 3h6v16h-6z" fill="#f7f7f7" stroke="#999" /></>,
  interact: <>{note(4, 8, 29)}<g transform="translate(18 23)">{check}</g></>,
  regenerate: <>{note(10, 13, 29)}<g transform="translate(17 27)">{check}</g><g transform="translate(2 1)">{cycle}</g></>,
  rules: <><path d="M1 2h44v45H1z" fill="#fafafa" stroke="#b7b9ba" strokeWidth="2" /><g transform="translate(2 4) scale(.6)">{check}</g><path d="M14 12h26M14 20h26M14 27h10M14 34h6" stroke="#9b9d9e" strokeWidth="2" /><circle cx="8" cy="20" r="1.7" stroke="#888" /><circle cx="8" cy="27" r="1.7" stroke="#888" /><circle cx="8" cy="34" r="1.7" stroke="#888" />{note(22, 26, 18)}<g transform="translate(27 32) scale(.72)">{check}</g></>,
  geometry: <><path d="M0 0h48v3H3v45H0z" fill="#bcbebe" /><path d="M3 3h45v45H3z" fill="#f3f4f4" /><text x="7" y="20" fontFamily="Liberation Sans" fontWeight="700" fontSize="18" fill="#4d5759">VDA</text>{note(13, 24, 24)}<g transform="translate(20 30)">{check}</g></>,
};

const Icon = ({ name, size = 24, box = 24 }: { name: string; size?: number; box?: number }) => (
  <Draw size={size} box={box}>{icons[name]}</Draw>
);

/* ---------- ribbon content ---------- */

type Tool = { icon: string; label: string; off?: boolean; menu?: boolean };
type RibbonGroup = { label: string; big?: { icon: string; label: string; menu?: boolean }; columns: Tool[][] };

const groups: RibbonGroup[] = [
  {
    label: "形状",
    big: { icon: "extrude", label: "拉伸" },
    columns: [[{ icon: "revolve", label: "旋转" }, { icon: "sweep", label: "扫描", menu: true }, { icon: "sweepBlend", label: "扫描混合" }]],
  },
  {
    label: "工程",
    columns: [
      [{ icon: "hole", label: "孔" }, { icon: "round", label: "倒圆角", menu: true }, { icon: "chamfer", label: "倒角", menu: true }],
      [{ icon: "draft", label: "拔模", menu: true }, { icon: "shell", label: "壳" }, { icon: "rib", label: "筋", menu: true }],
    ],
  },
  {
    label: "编辑",
    big: { icon: "pattern", label: "阵列", menu: true },
    columns: [
      [{ icon: "mirror", label: "镜像", off: true }, { icon: "trim", label: "修剪" }, { icon: "merge", label: "合并", off: true }],
      [{ icon: "extend", label: "延伸", off: true }, { icon: "offset", label: "偏移", off: true }, { icon: "intersect", label: "相交" }],
      [{ icon: "project", label: "投影" }, { icon: "thicken", label: "加厚", off: true }, { icon: "solidify", label: "实体化" }],
      [{ icon: "remove", label: "移除" }, { icon: "split", label: "分割", menu: true }, { icon: "quilt", label: "一体化曲面" }],
    ],
  },
  {
    label: "曲面",
    big: { icon: "boundary", label: "边界混合" },
    columns: [[{ icon: "fill", label: "填充" }, { icon: "style", label: "样式" }, { icon: "freestyle", label: "自由式" }]],
  },
  { label: "模型意图", big: { icon: "puzzle", label: "元件界面" }, columns: [] },
];

const tabs = ["分析", "实时仿真", "注释", "工具", "视图", "柔性建模", "应用程序"];

const viewTools: { icon: string; corner?: boolean; on?: boolean }[] = [
  { icon: "zoomFit" }, { icon: "zoomIn" }, { icon: "zoomOut" }, { icon: "repaint" },
  { icon: "shading", corner: true }, { icon: "box", corner: true }, { icon: "views", corner: true }, { icon: "camera" },
  { icon: "section" }, { icon: "datum", corner: true }, { icon: "axes", corner: true }, { icon: "annotate" },
  { icon: "spin", on: true }, { icon: "simulate" }, { icon: "pause" }, { icon: "stop" },
];

type Entry = { icon?: string; label: string; hot?: string; more?: boolean; on?: boolean };
const menuSections: Entry[][] = [
  [
    { icon: "page", label: "新建", hot: "N" },
    { icon: "open", label: "打开", hot: "O" },
    { icon: "save", label: "保存", hot: "S" },
    { icon: "saveAs", label: "另存为", hot: "A", more: true },
    { icon: "print", label: "打印", hot: "P", more: true },
    { icon: "close", label: "关闭", hot: "C" },
  ],
  [
    { label: "管理文件", hot: "F", more: true },
    { label: "准备", hot: "R", more: true, on: true },
    { label: "发送", hot: "S", more: true },
    { label: "管理会话", hot: "M", more: true },
    { label: "帮助", more: true },
  ],
  [
    { icon: "options", label: "选项", more: true },
    { icon: "exit", label: "退出", hot: "X" },
  ],
];

const prepareItems = [
  { icon: "props", label: "模型属性", hot: "I", note: "编辑模型属性。", on: true },
  { icon: "interact", label: "ModelCHECK 交互", hot: "M", note: "生成模型信息报告 (零件、装配或绘图)。" },
  { icon: "regenerate", label: "ModelCHECK 重新生成", hot: "C", note: "重新生成模型并生成模型检查信息报告。" },
  { icon: "rules", label: "ModelCHECK 规则检查", hot: "R", note: "显示与此模型关联的规则。" },
  { icon: "geometry", label: "ModelCHECK 几何检查", hot: "G", note: "检查模型几何是否符合 VDA 标准。" },
];

const Hot = ({ k }: { k?: string }) => (k ? <>(<u>{k}</u>)</> : null);

/* ---------- 3D part ---------- */

const PLANE = "#704a51";

const KeyHandle = () => (
  <Model width="730" height="430" viewBox="0 0 730 430" fill="none" role="img" aria-label="KEY_HANDLE">
    <defs>
      <linearGradient id="steel" x1="0" y1="0" x2="0" y2="1">
        <stop offset="0" stopColor="#a6b3c3" />
        <stop offset=".24" stopColor="#b1bed0" />
        <stop offset=".31" stopColor="#cdd4e4" />
        <stop offset=".37" stopColor="#f0fdff" />
        <stop offset=".41" stopColor="#dfecf6" />
        <stop offset=".48" stopColor="#a9b8c8" />
        <stop offset=".63" stopColor="#95a3b1" />
        <stop offset=".78" stopColor="#76818d" />
        <stop offset=".92" stopColor="#575d68" />
        <stop offset="1" stopColor="#565c66" />
      </linearGradient>
      <linearGradient id="rim" x1="0" y1="0" x2="0" y2="1">
        <stop offset="0" stopColor="#717b87" />
        <stop offset=".3" stopColor="#8e9bab" />
        <stop offset=".4" stopColor="#c9d6e4" />
        <stop offset=".5" stopColor="#7d8995" />
        <stop offset="1" stopColor="#50555f" />
      </linearGradient>
    </defs>
    <path d="m14 263 647-244 51 150L67 413z" fill="#e0e0e1" />
    <g transform="translate(363 216) rotate(-20.66)">
      <path d="M-240-55H236V55H-240z" fill="url(#steel)" />
      <path d="M-330-80H-240Q-228-78-224-57-216 0-226 66-230 79-240 80H-331Q-342 78-346 40-349 0-345-50-340-78-330-80z" fill="url(#steel)" />
      <path d="M-240-80Q-228-78-224-57-216 0-226 66-230 79-240 80-226 0-240-80z" fill="url(#rim)" opacity=".75" />
      <path d="M-330-80Q-340-78-345-50-349 0-346 40-342 78-331 80-343 0-330-80z" fill="url(#rim)" opacity=".3" />
      <path d="M-240-80Q-226 0-240 80M-331-80Q-343 0-331 80M-227-66Q-214 0-228 56M-224-55Q-217 0-226 60" stroke="#111" />
      <path d="M239-80H331Q342-79 345-60 350 0 345 60 342 79 331 80H239Q230 79 227 60 218 0 227-60 230-79 239-80z" fill="url(#steel)" />
      <path d="M239-80Q230-79 227-60 218 0 227 60 230 79 239 80 225 0 239-80z" fill="url(#rim)" opacity=".3" />
      <path d="M331-80Q342-79 345-60 350 0 345 60 342 79 331 80 327 0 331-80z" fill="url(#rim)" opacity=".75" />
      <path d="M341-70Q334 0 342 70L345 60Q350 0 345-60z" fill="#555a64" />
      <path d="M239-80Q225 0 239 80M331-80Q327 0 331 80M341-70Q334 0 342 70M225-56Q218 0 228 66" stroke="#111" />
      <path d="M342 70Q350 0 341-70" stroke="#16181b" strokeDasharray="6 4" />
    </g>
    <g stroke={PLANE} strokeWidth="1">
      <path d="m14 263 647-244 51 150L67 413z" />
      <path d="M26 316 670 72l30 46L55 361z" />
      <path d="m323 118 29 48 52 147-30-50z" />
      <path d="M43 338 690 95" strokeDasharray="2 2" />
    </g>
    <path d="m363 217-9-16" stroke="#3cff3c" strokeWidth="1.5" />
    <ellipse cx="357" cy="206" rx="3" ry="3" fill="#21e62b" />
    <path d="m344 187 3 6 1 6m-1-6 1-6" stroke="#3cff3c" />
    <path d="m363 217-45 17" stroke="#2ff" strokeWidth="1.3" />
    <path d="m318 234 14-9 2 5z" fill="#2ff" />
    <path d="M305 239h4l-4 12h5" stroke="#2ff" />
    <path d="m363 217 16 45" stroke="#ff2f2f" strokeWidth="1.3" />
    <path d="m371 245 5-2 3 19z" fill="#ff2f2f" />
    <path d="m385 266 6 11m0-12-5 13" stroke="#ff2f2f" />
    <text x="367" y="212" fontFamily="Liberation Mono" fontSize="16" fill="#755258">PRT_CSYS_DEF</text>
  </Model>
);

export default function App() {
  return (
    <Page>
      <GlobalStyle />
      <Defs />
      <TitleBar>
        <Brand>
          <Icon name="cube" />
          <BrandName>creo</BrandName>
        </Brand>
        <QuickButton aria-label="新建"><Icon name="page" /></QuickButton>
        <QuickButton aria-label="打开"><Icon name="open" /></QuickButton>
        <QuickButton aria-label="保存"><Icon name="save" /></QuickButton>
        <QuickButton aria-label="撤消"><Icon name="undo" /></QuickButton>
        <QuickArrow aria-label="撤消列表"><Caret color="#b3b6b7" /></QuickArrow>
        <QuickButton aria-label="重做"><Icon name="redo" /></QuickButton>
        <QuickArrow aria-label="重做列表"><Caret color="#b3b6b7" /></QuickArrow>
        <QuickButton aria-label="重新生成"><Icon name="regen" /></QuickButton>
        <QuickButton aria-label="窗口"><Icon name="windows" /></QuickButton>
        <QuickArrow aria-label="窗口列表"><Caret /></QuickArrow>
        <QuickButton aria-label="关闭"><Icon name="close" /></QuickButton>
        <QuickDivider />
        <CustomizeButton aria-label="自定义">
          <svg width="14" height="12" viewBox="0 0 14 12" aria-hidden="true"><path d="M0 0h14v2H0zM2 4h10l-5 7z" fill="#3d3f40" /></svg>
        </CustomizeButton>
        <WindowTitle>KEY_HANDLE (活动的) - Creo Parametric</WindowTitle>
      </TitleBar>

      <TabBar>
        <Tab $kind="file">文件</Tab>
        <Tab $kind="active">模型</Tab>
        {tabs.map((t) => <Tab key={t}>{t}</Tab>)}
      </TabBar>

      <Ribbon>
        <Group $lead>
          <GroupBody>
            <BigButton><Icon name="sketch" size={48} box={48} />草绘</BigButton>
          </GroupBody>
        </Group>
        {groups.map((g) => (
          <Group key={g.label}>
            <GroupBody>
              {g.big && (
                <BigButton>
                  <Icon name={g.big.icon} size={48} box={48} />
                  {g.big.label}
                  {g.big.menu && <Caret />}
                </BigButton>
              )}
              {g.columns.map((col) => (
                <Column key={col[0].label}>
                  {col.map((t) => (
                    <ToolButton key={t.label} disabled={t.off}>
                      <Icon name={t.icon} />
                      {t.label}
                      {t.menu && <ArrowGap><Caret /></ArrowGap>}
                    </ToolButton>
                  ))}
                </Column>
              ))}
            </GroupBody>
            <GroupLabel>{g.label}<Caret /></GroupLabel>
          </Group>
        ))}
      </Ribbon>

      <Workspace>
        <TreePanel />
        <Canvas>
          <ViewBar>
            {viewTools.map((t) => (
              <ViewButton key={t.icon} $on={t.on} aria-label={t.icon}>
                <Icon name={t.icon} />
                {t.corner && <Corner />}
              </ViewButton>
            ))}
          </ViewBar>
          <KeyHandle />
        </Canvas>
      </Workspace>

      <FileMenu>
        <MenuFrame>
          <MenuList>
            {menuSections.map((section, i) => (
              <React.Fragment key={section[0].label}>
                {i > 0 && <MenuRule />}
                {section.map((e) => (
                  <MenuItem key={e.label} $on={e.on}>
                    {e.icon && <MenuIcon><Draw size={48} box={48}>{bigIcons[e.icon]}</Draw></MenuIcon>}
                    <MenuText>{e.label}<Hot k={e.hot} /></MenuText>
                    {e.more && <CaretRight />}
                  </MenuItem>
                ))}
              </React.Fragment>
            ))}
          </MenuList>
          <SubMenu>
            <SubTitle>准备要分布的模型</SubTitle>
            {prepareItems.map((p) => (
              <SubItem key={p.label} $on={p.on}>
                <Draw size={48} box={48}>{bigIcons[p.icon]}</Draw>
                <strong>{p.label}<Hot k={p.hot} /></strong>
                <span>{p.note}</span>
              </SubItem>
            ))}
          </SubMenu>
        </MenuFrame>
        <MenuFooter>
          <FooterButton>调试<Caret /></FooterButton>
        </MenuFooter>
      </FileMenu>

      <Tooltip role="tooltip">
        <TipHead><Draw size={24} box={48}>{bigIcons.props}</Draw>模型属性</TipHead>
        <p>编辑模型属性。</p>
      </Tooltip>

      <Box $x={7} $y={41} $w={103} $h={64} />
      <Box $x={4} $y={475} $w={222} $h={72} />
      <Box $x={191} $y={124} $w={477} $h={73} />
      <Mark $x={130} $y={14}>1</Mark>
      <Mark $x={250} $y={467}>2</Mark>
      <Mark $x={694} $y={120}>3</Mark>
      <Mark $x={840} $y={404} $size={91}>选择材料</Mark>
    </Page>
  );
}
